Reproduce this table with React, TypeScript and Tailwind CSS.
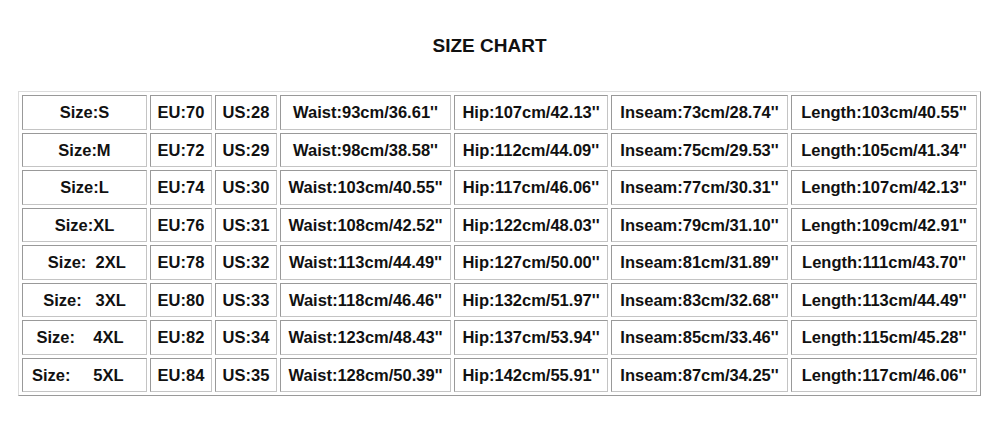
const rows = [
  ['Size:S', 'EU:70', 'US:28', "Waist:93cm/36.61''", "Hip:107cm/42.13''", "Inseam:73cm/28.74''", "Length:103cm/40.55''"],
  ['Size:M', 'EU:72', 'US:29', "Waist:98cm/38.58''", "Hip:112cm/44.09''", "Inseam:75cm/29.53''", "Length:105cm/41.34''"],
  ['Size:L', 'EU:74', 'US:30', "Waist:103cm/40.55''", "Hip:117cm/46.06''", "Inseam:77cm/30.31''", "Length:107cm/42.13''"],
  ['Size:XL', 'EU:76', 'US:31', "Waist:108cm/42.52''", "Hip:122cm/48.03''", "Inseam:79cm/31.10''", "Length:109cm/42.91''"],
  [' Size:  2XL', 'EU:78', 'US:32', "Waist:113cm/44.49''", "Hip:127cm/50.00''", "Inseam:81cm/31.89''", "Length:111cm/43.70''"],
  ['Size:   3XL', 'EU:80', 'US:33', "Waist:118cm/46.46''", "Hip:132cm/51.97''", "Inseam:83cm/32.68''", "Length:113cm/44.49''"],
  ['Size:    4XL  ', 'EU:82', 'US:34', "Waist:123cm/48.43''", "Hip:137cm/53.94''", "Inseam:85cm/33.46''", "Length:115cm/45.28''"],
  ['Size:     5XL   ', 'EU:84', 'US:35', "Waist:128cm/50.39''", "Hip:142cm/55.91''", "Inseam:87cm/34.25''", "Length:117cm/46.06''"],
]

const widths = ['w-[125px]', 'w-[62px]', 'w-[62px]', 'w-[171px]', 'w-[154px]', 'w-[177px]', 'w-[186px]']

export default function App() {
  return (
    <div className="w-[1000px] h-[421px] bg-white text-[#111] font-['Liberation_Sans',Arial,sans-serif] font-bold">
      <h1 className="pt-[35px] pr-[21px] text-center text-[19px] leading-[22px] font-bold">SIZE CHART</h1>
      <table className="mt-[34px] ml-[18px] border-separate border-spacing-x-[3px] border-spacing-y-[3.5px] border border-t-[#dcdcdc] border-l-[#dcdcdc] border-r-[#9a9a9a] border-b-[#9a9a9a] table-fixed">
        <tbody>
          {rows.map((r, i) => (
            <tr key={i}>
              {r.map((c, j) => (
                <td
                  key={j}
                  className={`${widths[j]} h-[34.5px] p-0 text-center text-[16.5px] leading-none whitespace-pre border border-t-[#999] border-l-[#999] border-r-[#c4c4c4] border-b-[#c4c4c4]`}
                >
                  {c}
                </td>
              ))}
            </tr>
          ))}
        </tbody>
      </table>
    </div>
  )
}
